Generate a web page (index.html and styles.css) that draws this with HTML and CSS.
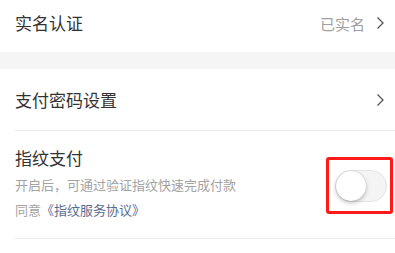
FILE: index.html
```html
<!DOCTYPE html>
<html lang="zh">
<head>
<meta charset="utf-8">
<link rel="stylesheet" href="styles.css">
</head>
<body>
<div class="page">
  <div class="row row-top">
    <span class="label">实名认证</span>
    <span class="right">
      <span class="value">已实名</span>
      <svg class="chev" width="9" height="14" viewBox="0 0 9 14"><path d="M1.5 1.5 L7 7 L1.5 12.5" fill="none" stroke="#555" stroke-width="1.3"/></svg>
    </span>
  </div>
  <div class="gap"></div>
  <div class="row row-pay">
    <span class="label">支付密码设置</span>
    <span class="right">
      <svg class="chev" width="9" height="14" viewBox="0 0 9 14"><path d="M1.5 1.5 L7 7 L1.5 12.5" fill="none" stroke="#555" stroke-width="1.3"/></svg>
    </span>
  </div>
  <div class="row row-finger">
    <div class="info">
      <div class="label">指纹支付</div>
      <div class="sub">开启后，可通过验证指纹快速完成付款</div>
      <div class="sub agree">同意<span class="link">《指纹服务协议》</span></div>
    </div>
    <div class="mark">
      <div class="switch"><div class="thumb"></div></div>
    </div>
  </div>
</div>
</body>
</html>
```
FILE: styles.css
```css
html, body {
  margin: 0;
  padding: 0;
  background: #ffffff;
}
body {
  font-family: "Noto Sans CJK SC", "Noto Sans", sans-serif;
  color: #333333;
}
.page {
  width: 395px;
}
.row {
  display: flex;
  align-items: center;
  justify-content: space-between;
  margin-left: 15px;
  padding-right: 10px;
}
.label {
  font-size: 17px;
  line-height: 24px;
  color: #333333;
}
.row-top {
  height: 46px;
  padding-bottom: 6px;
}
.right {
  display: flex;
  align-items: center;
}
.value {
  font-size: 15px;
  color: #a0a0a0;
  margin-right: 11px;
}
.chev {
  display: block;
}
.gap {
  height: 17px;
  background: #f5f5f5;
}
.row-pay {
  height: 61px;
  border-bottom: 1px solid #ebebeb;
}
.row-finger {
  height: 107px;
  border-bottom: 1px solid #ebebeb;
  padding-right: 2px;
  align-items: flex-start;
}
.info {
  padding-top: 15px;
}
.sub {
  font-size: 13px;
  line-height: 20px;
  color: #a3a3a3;
  margin-top: 5px;
}
.agree {
  margin-top: 5px;
}
.link {
  color: #5b6b8f;
}
.mark {
  margin-top: 26px;
  width: 61px;
  height: 51px;
  border: 3px solid #ff1a1a;
  border-radius: 3px;
  display: flex;
  align-items: center;
  justify-content: center;
}
.switch {
  position: relative;
  width: 50px;
  height: 30px;
  border-radius: 16px;
  background: #f4f4f4;
  border: 1px solid #e4e4e4;
  margin-left: 2px;
}
.thumb {
  position: absolute;
  left: 0;
  top: 0;
  width: 30px;
  height: 30px;
  border-radius: 50%;
  background: #ffffff;
  box-shadow: 0 2px 4px rgba(0,0,0,0.25), 0 0 1px rgba(0,0,0,0.2);
}
```
